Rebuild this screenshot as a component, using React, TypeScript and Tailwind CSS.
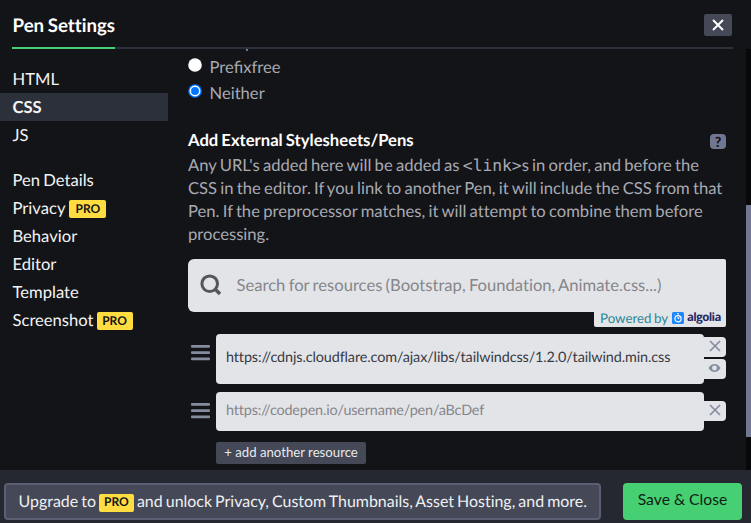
import type { ReactNode } from "react";

function ProBadge({ className = "" }: { className?: string }) {
  return (
    <span
      className={`inline-flex h-[18px] items-center justify-center rounded-[2px] bg-[#ffdd40] pb-[1px] text-[12px] leading-none font-bold text-[#131417] ${className}`}
    >
      PRO
    </span>
  );
}

function NavItem({ children, active = false }: { children: ReactNode; active?: boolean }) {
  return (
    <li
      className={`flex h-[28px] items-center pl-[12.5px] text-[16.6px] leading-[23px] text-[#f4f4f6] ${
        active ? "bg-[#2c303a] font-bold" : ""
      }`}
    >
      {children}
    </li>
  );
}

function CloseIcon({ className }: { className: string }) {
  return (
    <svg viewBox="0 0 12 12" className={className} fill="none" stroke="currentColor">
      <path d="M1 1 11 11M11 1 1 11" />
    </svg>
  );
}

function DragHandle() {
  return (
    <svg viewBox="0 0 19 16" className="h-[16px] w-[19px]" fill="#868ca0">
      <rect width="19" height="2.7" y="0" rx="1" />
      <rect width="19" height="2.7" y="6.3" rx="1" />
      <rect width="19" height="2.7" y="12.6" rx="1" />
    </svg>
  );
}

function Header() {
  return (
    <header className="flex h-[49px] shrink-0 pl-[12px]">
      <div className="flex w-[721px] justify-between border-b-2 border-[#2c303a]">
        <h1 className="-mb-[2px] h-[49px] w-[103px] border-b-2 border-[#47cf73] pt-[13px] pl-[0.5px] text-[18.7px] leading-[25px] font-bold whitespace-nowrap">
          Pen Settings
        </h1>
        <button className="mt-[14px] mr-[1px] flex h-[22px] w-[28px] items-center justify-center rounded-[2px] bg-[#444857]">
          <CloseIcon className="h-[12px] w-[12px] stroke-[2]" />
        </button>
      </div>
    </header>
  );
}

function Sidebar() {
  return (
    <nav className="w-[168px] shrink-0 pt-[16px]">
      <ul>
        <NavItem>HTML</NavItem>
        <NavItem active>CSS</NavItem>
        <NavItem>JS</NavItem>
      </ul>
      <ul className="mt-[17px]">
        <NavItem>Pen Details</NavItem>
        <NavItem>
          Privacy <ProBadge className="mt-[2px] ml-[4px] w-[37px]" />
        </NavItem>
        <NavItem>Behavior</NavItem>
        <NavItem>Editor</NavItem>
        <NavItem>Template</NavItem>
        <NavItem>
          Screenshot <ProBadge className="mt-[2px] ml-[3px] w-[36px]" />
        </NavItem>
      </ul>
    </nav>
  );
}

function Radio({ label, checked = false }: { label: string; checked?: boolean }) {
  return (
    <label className="flex h-[26px] items-start text-[16.6px] leading-[26px] [font-variant-ligatures:common-ligatures]">
      <svg viewBox="0 0 14 14" className="mt-[4px] mr-[7.5px] h-[14px] w-[14px]">
        <circle cx="7" cy="7" r="6.800" fill={checked ? "#0075ff" : "#fff"} />
        {checked && <circle cx="7" cy="7" r="4.700" fill="#0075ff" stroke="#fff" strokeWidth="1.500" />}
      </svg>
      {label}
    </label>
  );
}

function AlgoliaMark() {
  return (
    <svg viewBox="0 0 12 12" className="mr-[3px] ml-[4px] h-[12px] w-[12px]" fill="none">
      <rect width="12" height="12" rx="1.5" fill="#1c86fc" />
      <circle cx="6" cy="6.7" r="3.1" stroke="#fff" strokeWidth="1.2" />
      <path d="M5 1.8h2M2.6 3l.9.9M6 6.7V4.9M6 6.7l1.5-.8" stroke="#fff" strokeWidth="1" />
    </svg>
  );
}

function SearchBox() {
  return (
    <div className="mt-[13.5px]">
      <div className="flex h-[52.5px] items-center rounded-[6px] rounded-tr-[2px] rounded-br-none bg-[#e3e4e8] pl-[12px]">
        <svg viewBox="0 0 22 22" className="h-[22px] w-[22px]" fill="none" stroke="#55565a">
          <circle cx="9.7" cy="9.7" r="7.8" strokeWidth="3" />
          <path d="m15.5 15.5 4.5 4.5" strokeWidth="3.6" />
        </svg>
        <span className="ml-[14.5px] text-[16.63px] whitespace-nowrap text-[#85868a]">
          Search for resources (Bootstrap, Foundation, Animate.css...)
        </span>
      </div>
      <div className="ml-auto flex h-[15px] w-[132px] items-center rounded-b-[2px] bg-[#e3e4e8] pb-[2px] pl-[6px] text-[13.3px] leading-none whitespace-nowrap text-[#2a8696]">
        <span className="pt-[1px]">Powered by</span>
        <AlgoliaMark />
        <b className="pb-[1px] font-['Open_Sans',sans-serif] text-[11.5px] tracking-[-0.6px] text-[#252a66]">algolia</b>
      </div>
    </div>
  );
}

function Resources() {
  return (
    <div className="text-[14.4px] tracking-[-0.11px] whitespace-nowrap">
      <div className="mt-[7px] flex h-[50px]">
        <div className="w-[28px] pt-[11px] pl-[3px]">
          <DragHandle />
        </div>
        <div className="flex w-[488px] items-center rounded-[4px] bg-[#e3e4e8] pb-[1px] pl-[10px] text-[#373a44]">
          https://cdnjs.cloudflare.com/ajax/libs/tailwindcss/1.2.0/tailwind.min.css
        </div>
        <div className="flex w-[22px] flex-col gap-[2px] pt-[3px] text-[#868ca0]">
          <span className="flex h-[20px] items-center justify-center rounded-r-[4px] bg-[#e3e4e8] pr-[1px] pb-[1px]">
            <CloseIcon className="h-[12px] w-[12px] stroke-[1.7]" />
          </span>
          <span className="flex h-[20px] items-center justify-center rounded-r-[4px] bg-[#e3e4e8] pr-[1px] pb-[1px]">
            <svg viewBox="0 0 12 8" className="h-[8px] w-[13px]">
              <path
                d="M0 4Q2.4 0 6 0t6 4Q9.600 8 6 8T0 4Zm6-2.400a2.400 2.400 0 1 0 0 4.800 2.400 2.400 0 0 0 0-4.800Z"
                fill="currentColor"
                fillRule="evenodd"
              />
            </svg>
          </span>
        </div>
      </div>
      <div className="mt-[8px] flex h-[39px]">
        <div className="w-[28px] pt-[11px] pl-[3px]">
          <DragHandle />
        </div>
        <div className="flex w-[488px] items-center rounded-[4px] bg-[#e3e4e8] pl-[10px] tracking-[-0.17px] text-[#85868a]">
          https://codepen.io/username/pen/aBcDef
        </div>
        <span className="mt-[9px] flex h-[20px] w-[22px] items-center justify-center rounded-r-[4px] bg-[#e3e4e8] pr-[1px] pb-[1px] text-[#868ca0]">
          <CloseIcon className="h-[12px] w-[12px] stroke-[1.7]" />
        </span>
      </div>
      <button className="mt-[11px] ml-[28px] flex h-[22px] w-[150px] items-center justify-center rounded-[2px] bg-[#444857] pt-[1px] text-[13.2px] tracking-normal text-[#e8e8ec]">
        + add another resource
      </button>
    </div>
  );
}

function Content() {
  return (
    <main className="-mt-[21px] ml-[20px] w-[538px] shrink-0 text-[#a9aab3]">
      <div className="pt-[1px] -mb-[1px]">
        <Radio label="Autoprefixer" />
      </div>
      <Radio label="Prefixfree" />
      <Radio label="Neither" checked />
      <section className="mt-[22px]">
        <div className="flex h-[24px] items-center justify-between">
          <h2 className="text-[16.65px] leading-[22px] font-bold text-white">Add External Stylesheets/Pens</h2>
          <span className="mt-[3px] flex h-[15px] w-[16px] items-center justify-center rounded-[4px] bg-[#717790] text-[14px] leading-none font-black text-[#131417]">
            ?
          </span>
        </div>
        <p className="mt-[1.5px] text-[16.63px] leading-[23px] whitespace-nowrap">
          Any URL's added here will be added as{" "}
          <code className="font-['DejaVu_Sans_Mono',monospace] text-[16.3px] leading-none">&lt;link&gt;</code>s in order, and before the
          <br />
          CSS in the editor. If you link to another Pen, it will include the CSS from that
          <br />
          Pen. If the preprocessor matches, it will attempt to combine them before
          <br />
          processing.
        </p>
        <SearchBox />
        <Resources />
      </section>
    </main>
  );
}

function Footer() {
  return (
    <footer className="flex h-[53px] shrink-0 items-start bg-[#252830] pt-[13px] pl-[4px] text-[16px] whitespace-nowrap">
      <div className="flex h-[37px] w-[597px] items-center rounded-[4px] border-2 border-[#5a5f73] bg-[#444857] pl-[12.5px] text-[15.95px] text-[#f0f0f2]">
        Upgrade to <ProBadge className="mx-[3px] mt-[2px] h-[16px] w-[35px]" /> and unlock Privacy, Custom Thumbnails, Asset Hosting, and more.
      </div>
      <button className="ml-[22px] h-[37px] w-[119px] rounded-[4px] bg-[#47cf73] pb-[3px] text-[15.7px] text-[#0b1f12]">
        Save &amp; Close
      </button>
    </footer>
  );
}

export default function App() {
  return (
    <div className="flex h-[523px] w-[751px] flex-col overflow-hidden bg-[#131417] font-['Lato',sans-serif] text-white [font-variant-ligatures:no-common-ligatures] [text-rendering:geometricPrecision] [word-spacing:-1px]">
      <Header />
      <div className="flex min-h-0 flex-1 overflow-hidden">
        <Sidebar />
        <Content />
        <div className="ml-auto w-[5px] shrink-0 bg-[#08080a] pt-[156px]">
          <div className="h-[232px] bg-[#717790]" />
        </div>
      </div>
      <Footer />
    </div>
  );
}
